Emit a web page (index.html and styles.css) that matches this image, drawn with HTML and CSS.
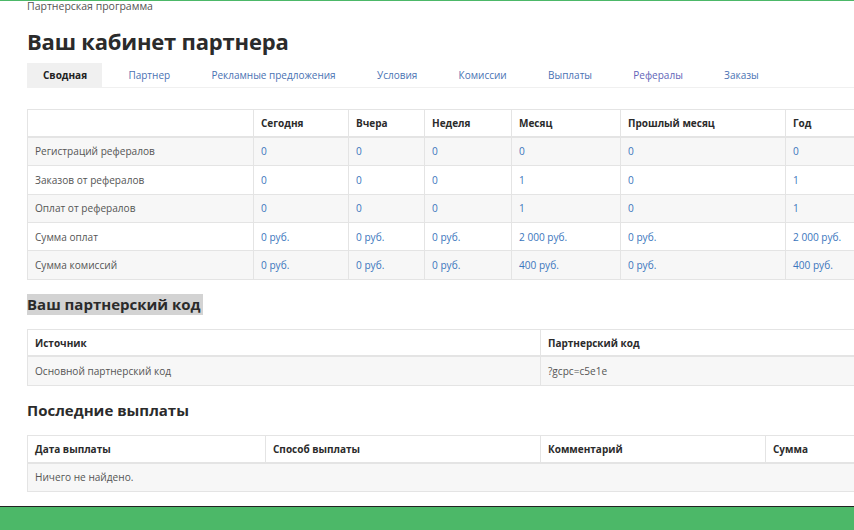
FILE: index.html
```html
<!DOCTYPE html>
<html lang="ru">
<head>
<meta charset="utf-8">
<title>Ваш кабинет партнера</title>
<link rel="stylesheet" href="styles.css">
</head>
<body>
<div class="topline"></div>
<div class="page">
  <div class="crumbs">Партнерская программа</div>
  <h1 class="title">Ваш кабинет партнера</h1>
  <nav class="tabs">
    <a class="tab active">Сводная</a>
    <a class="tab">Партнер</a>
    <a class="tab">Рекламные предложения</a>
    <a class="tab">Условия</a>
    <a class="tab">Комиссии</a>
    <a class="tab">Выплаты</a>
    <a class="tab visited">Рефералы</a>
    <a class="tab">Заказы</a>
  </nav>

  <table class="grid stats">
    <colgroup>
      <col class="c-label"><col class="c-today"><col class="c-yest"><col class="c-week"><col class="c-month"><col class="c-prev"><col class="c-year">
    </colgroup>
    <thead>
      <tr><th></th><th>Сегодня</th><th>Вчера</th><th>Неделя</th><th>Месяц</th><th>Прошлый месяц</th><th>Год</th></tr>
    </thead>
    <tbody>
      <tr><td>Регистраций рефералов</td><td><a>0</a></td><td><a>0</a></td><td><a>0</a></td><td><a>0</a></td><td><a>0</a></td><td><a>0</a></td></tr>
      <tr><td>Заказов от рефералов</td><td><a>0</a></td><td><a>0</a></td><td><a>0</a></td><td><a>1</a></td><td><a>0</a></td><td><a>1</a></td></tr>
      <tr><td>Оплат от рефералов</td><td><a>0</a></td><td><a>0</a></td><td><a>0</a></td><td><a>1</a></td><td><a>0</a></td><td><a>1</a></td></tr>
      <tr><td>Сумма оплат</td><td><a>0 руб.</a></td><td><a>0 руб.</a></td><td><a>0 руб.</a></td><td><a>2 000 руб.</a></td><td><a>0 руб.</a></td><td><a>2 000 руб.</a></td></tr>
      <tr><td>Сумма комиссий</td><td><a>0 руб.</a></td><td><a>0 руб.</a></td><td><a>0 руб.</a></td><td><a>400 руб.</a></td><td><a>0 руб.</a></td><td><a>400 руб.</a></td></tr>
    </tbody>
  </table>

  <h2 class="section highlighted">Ваш партнерский код</h2>
  <table class="grid codes">
    <colgroup><col class="c-source"><col></colgroup>
    <thead><tr><th>Источник</th><th>Партнерский код</th></tr></thead>
    <tbody><tr><td>Основной партнерский код</td><td>?gcpc=c5e1e</td></tr></tbody>
  </table>

  <h2 class="section">Последние выплаты</h2>
  <table class="grid payouts">
    <colgroup><col class="c-date"><col class="c-method"><col class="c-comment"><col></colgroup>
    <thead><tr><th>Дата выплаты</th><th>Способ выплаты</th><th>Комментарий</th><th>Сумма</th></tr></thead>
    <tbody><tr><td colspan="4">Ничего не найдено.</td></tr></tbody>
  </table>
</div>
<footer class="footer"></footer>
</body>
</html>
```

FILE: styles.css
```css
html, body {
  margin: 0;
  padding: 0;
  overflow: hidden;
  background: #fff;
}
body {
  font-family: "Open Sans", "Liberation Sans", sans-serif;
  font-size: 11px;
  color: #555;
}
.topline {
  height: 1px;
  background: #4cb868;
}
.page {
  width: 843px;
  padding-left: 27px;
}
.crumbs {
  font-size: 10.5px;
  line-height: 11px;
  color: #555;
}
.title {
  margin: 15px 0 0;
  font-size: 22px;
  line-height: 28px;
  font-weight: 700;
  color: #2b2b2b;
  letter-spacing: -0.2px;
}
.tabs {
  display: flex;
  gap: 10.3px;
  margin-top: 8px;
  border-bottom: 1px solid #f0f0f0;
  width: 827px;
}
.tab {
  display: block;
  padding: 5px 15px 5px 16px;
  line-height: 14px;
  font-size: 10px;
  color: #4a72b3;
  text-decoration: none;
}
.tab.visited { color: #5f64b8; }
.tab.active {
  background: #f0f0f0;
  color: #222;
  font-weight: 700;
}
.grid {
  width: 843px;
  table-layout: fixed;
  border-collapse: collapse;
  border: 1px solid #e4e4e4;
}
.grid th, .grid td {
  text-align: left;
  padding: 7.7px 7px;
  line-height: 12px;
  border: 1px solid #e4e4e4;
  white-space: nowrap;
  overflow: hidden;
}
.grid th {
  font-weight: 700;
  color: #2b2b2b;
  font-size: 10px;
  background: #fff;
  border-bottom: 2px solid #e4e4e4;
  padding-top: 6.9px;
  padding-bottom: 6.9px;
}
.grid td { font-size: 10.1px; color: #555; }
.grid tbody tr:nth-child(odd) td { background: #f7f7f7; }
.grid a { color: #3b76bd; text-decoration: none; }
.stats { margin-top: 21px; }
.c-label { width: 226px; }
.c-today { width: 95px; }
.c-yest { width: 76px; }
.c-week { width: 87px; }
.c-month { width: 109px; }
.c-prev { width: 165px; }
.c-source { width: 513px; }
.c-date { width: 238px; }
.c-method { width: 275px; }
.c-comment { width: 225px; }
.section {
  margin: 14px 0 14px;
  font-size: 15px;
  line-height: 21px;
  font-weight: 700;
  color: #2b2b2b;
  display: inline-block;
  padding-right: 2px;
}
.section.highlighted { background: #d3d3d3; }
.footer {
  margin-top: 14px;
  height: 40px;
  border-top: 1px solid #222;
  background: #4cb868;
}
```
